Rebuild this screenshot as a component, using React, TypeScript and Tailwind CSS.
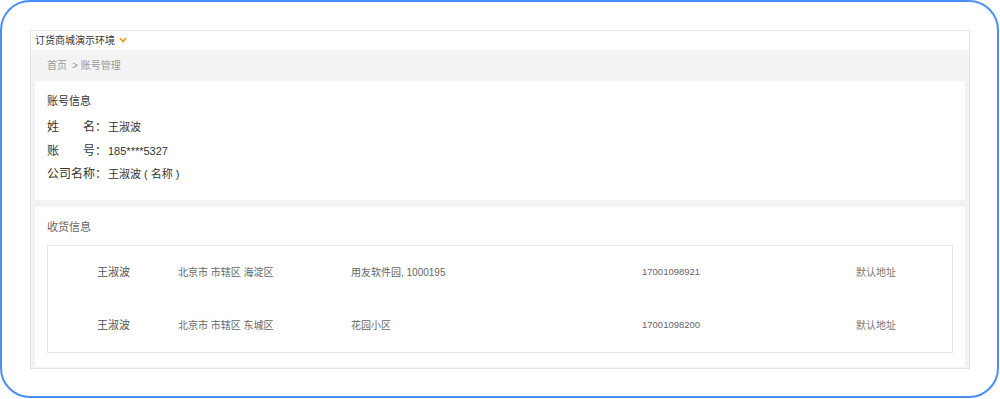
import React from "react";

const font = { fontFamily: '"Liberation Sans", "Noto Sans CJK SC", sans-serif' };

const rows = [
  { name: "王淑波", area: "北京市 市辖区 海淀区", detail: "用友软件园, 1000195", phone: "17001098921", tag: "默认地址" },
  { name: "王淑波", area: "北京市 市辖区 东城区", detail: "花园小区", phone: "17001098200", tag: "默认地址" },
];

function Label({ text }: { text: string }) {
  return (
    <span className="inline-block w-[48px]" style={{ textAlign: "justify", textAlignLast: "justify" }}>
      {text}
    </span>
  );
}

export default function App() {
  return (
    <div className="w-[1000px] h-[399px] bg-white" style={font}>
      <div className="w-[999px] h-[398px] border-2 border-[#4a8ef7] rounded-[30px] pt-[28px] pl-[28px]">
        <div className="w-[940px] border border-[#e3e3e3] bg-white">
          <div className="h-[19px] flex items-center pl-[4px] text-[10px] text-[#333] gap-[4px]">
            <span>订货商城演示环境</span>
            <svg width="8" height="6" viewBox="0 0 8 6" className="mt-[-1px]">
              <polyline points="1,1 4,4.5 7,1" fill="none" stroke="#f39a1e" strokeWidth="1.8" />
            </svg>
          </div>
          <div className="bg-[#f3f3f3] px-[4px] pb-[1px]">
            <div className="h-[31px] flex items-center pl-[12px] text-[10px] text-[#999]">
              <span>首页</span>
              <span className="ml-[5px]">&gt;</span>
              <span className="ml-[3px]">账号管理</span>
            </div>
            <div className="bg-white h-[119px] pl-[12px] pt-[12px] text-[11px] text-[#333]">
              <div className="h-[16px] leading-[16px]">账号信息</div>
              <div className="mt-[10px] h-[16px] leading-[16px] flex">
                <span className="text-[12px]"><Label text="姓名" /></span>
                <span className="w-[13px] text-[12px]">：</span>
                <span>王淑波</span>
              </div>
              <div className="mt-[8px] h-[16px] leading-[16px] flex">
                <span className="text-[12px]"><Label text="账号" /></span>
                <span className="w-[13px] text-[12px]">：</span>
                <span>185****5327</span>
              </div>
              <div className="mt-[7px] h-[16px] leading-[16px] flex">
                <span className="text-[12px]"><Label text="公司名称" /></span>
                <span className="w-[13px] text-[12px]">：</span>
                <span>王淑波 ( 名称 )</span>
              </div>
            </div>
            <div className="bg-white mt-[7px] pl-[12px] pr-[12px] pt-[12px] pb-[14px]">
              <div className="h-[16px] leading-[16px] text-[11px] text-[#666]">收货信息</div>
              <div className="mt-[10px] border border-[#e5e5e5]">
                {rows.map((r, i) => (
                  <div key={i} className="h-[53px] flex items-center pl-[49px] text-[#666]">
                    <span className="w-[81px] text-[11px] text-[#555]">{r.name}</span>
                    <span className="w-[173px] text-[10px]">{r.area}</span>
                    <span className="w-[291px] text-[10px]">{r.detail}</span>
                    <span className="w-[214px] text-[9.5px]">{r.phone}</span>
                    <span className="text-[10px] text-[#777]">{r.tag}</span>
                  </div>
                ))}
              </div>
            </div>
          </div>
        </div>
      </div>
    </div>
  );
}
